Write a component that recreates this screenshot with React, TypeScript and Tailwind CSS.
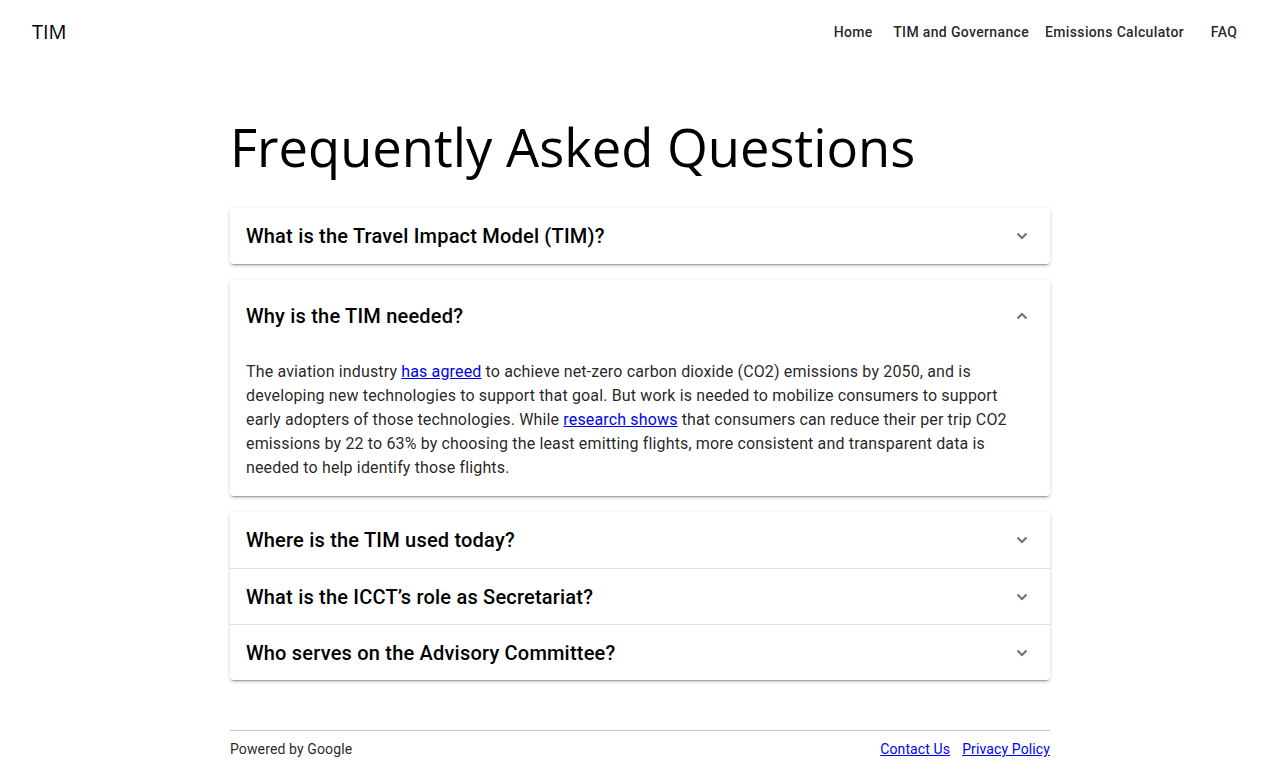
import React from "react";

const Chevron = ({ up }: { up?: boolean }) => (
  <svg width="24" height="24" viewBox="0 0 24 24" className="text-[#6f6f6f]">
    {up ? (
      <path d="M7.5 14.5 L12 10 L16.5 14.5" fill="none" stroke="currentColor" strokeWidth="2" />
    ) : (
      <path d="M7.5 9.5 L12 14 L16.5 9.5" fill="none" stroke="currentColor" strokeWidth="2" />
    )}
  </svg>
);

const Header = ({ title, short }: { title: string; short?: boolean }) => (
  <div className={`flex items-center justify-between pl-4 pr-4 ${short ? "h-[55px]" : "h-14"}`}>
    <span className="text-[20px] font-medium tracking-[0.2px] text-black">{title}</span>
    <Chevron />
  </div>
);

const shadow =
  "shadow-[0_3px_1px_-2px_rgba(0,0,0,0.2),0_2px_2px_0_rgba(0,0,0,0.14),0_1px_5px_0_rgba(0,0,0,0.12)]";

export default function App() {
  return (
    <div className="min-h-[783px] bg-white font-['Roboto',sans-serif] text-[rgba(0,0,0,0.87)]">
      <header className="flex h-16 items-center justify-between pl-8 pr-6">
        <span className="font-['Open_Sans',sans-serif] text-[20px] text-black">TIM</span>
        <nav className="flex items-center">
          {["Home", "TIM and Governance", "Emissions Calculator", "FAQ"].map((n) => (
            <span
              key={n}
              className="flex h-9 min-w-16 items-center justify-center px-2 text-[14px] font-medium tracking-[0.35px] text-[rgba(0,0,0,0.87)]"
            >
              {n}
            </span>
          ))}
        </nav>
      </header>
      <main className="mx-auto w-[820px] pt-[51px]">
        <h1 className="font-['Open_Sans',sans-serif] text-[52.5px] leading-[64px] text-black">
          Frequently Asked Questions
        </h1>
        <div className="mt-[29px] flex flex-col">
          <div className={`rounded ${shadow} bg-white`}>
            <Header title="What is the Travel Impact Model (TIM)?" />
          </div>
          <div className={`mt-4 rounded ${shadow} bg-white`}>
            <div className="flex h-[72px] items-center justify-between px-4">
              <span className="text-[20px] font-medium tracking-[0.2px] text-black">
                Why is the TIM needed?
              </span>
              <Chevron up />
            </div>
            <p className="px-4 pb-4 pt-2 text-[16px] leading-6 tracking-[0.15px] text-[rgba(0,0,0,0.87)]">
              The aviation industry{" "}
              <a className="text-[#0000ee] underline" href="#">
                has agreed
              </a>{" "}
              to achieve net-zero carbon dioxide (CO2) emissions by 2050, and is developing new
              technologies to support that goal. But work is needed to mobilize consumers to support
              early adopters of those technologies. While{" "}
              <a className="text-[#0000ee] underline" href="#">
                research shows
              </a>{" "}
              that consumers can reduce their per trip CO2 emissions by 22 to 63% by choosing the
              least emitting flights, more consistent and transparent data is needed to help identify
              those flights.
            </p>
          </div>
          <div className={`mt-4 rounded ${shadow} bg-white`}>
            <Header title="Where is the TIM used today?" />
            <div className="border-t border-[#e0e0e0]">
              <Header title="What is the ICCT’s role as Secretariat?" short />
            </div>
            <div className="border-t border-[#e0e0e0]">
              <Header title="Who serves on the Advisory Committee?" short />
            </div>
          </div>
        </div>
        <footer className="mt-[50px] flex items-center justify-between border-t border-[#c8c8c8] pt-2 text-[14px] tracking-[0.12px] text-[rgba(0,0,0,0.87)]">
          <span>Powered by Google</span>
          <div className="flex gap-3">
            <a className="text-[#0000ee] underline" href="#">
              Contact Us
            </a>
            <a className="text-[#0000ee] underline" href="#">
              Privacy Policy
            </a>
          </div>
        </footer>
      </main>
    </div>
  );
}
